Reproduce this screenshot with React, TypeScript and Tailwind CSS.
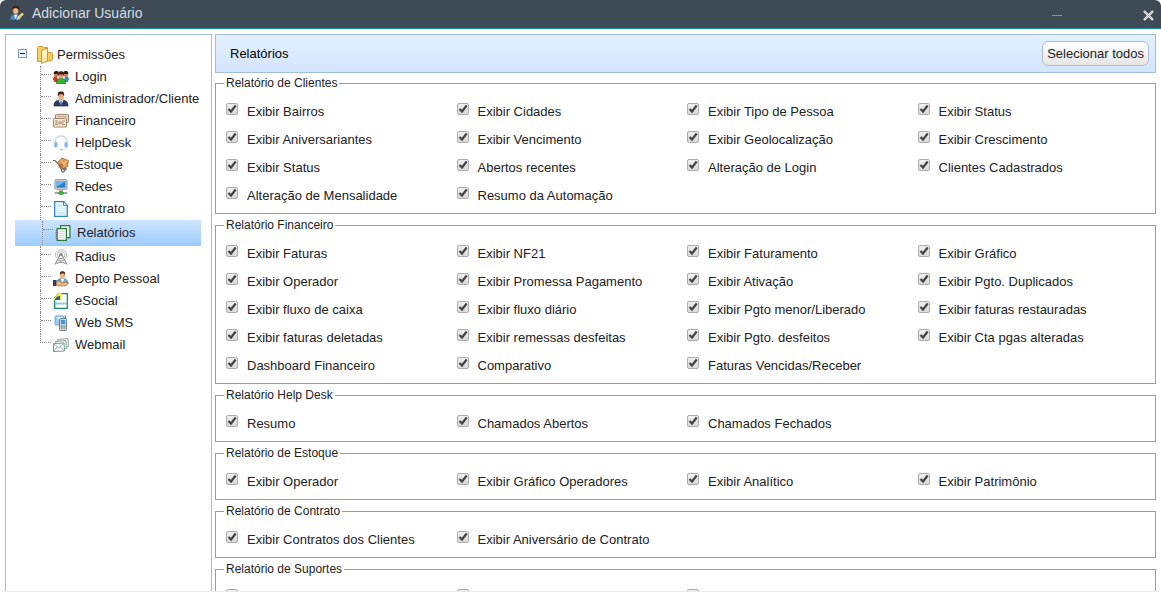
import { useState } from "react";
import type { ReactNode } from "react";

const groups: { title: string; items: string[] }[] = [
  {
    title: "Relatório de Clientes",
    items: [
      "Exibir Bairros", "Exibir Cidades", "Exibir Tipo de Pessoa", "Exibir Status",
      "Exibir Aniversariantes", "Exibir Vencimento", "Exibir Geolocalização", "Exibir Crescimento",
      "Exibir Status", "Abertos recentes", "Alteração de Login", "Clientes Cadastrados",
      "Alteração de Mensalidade", "Resumo da Automação",
    ],
  },
  {
    title: "Relatório Financeiro",
    items: [
      "Exibir Faturas", "Exibir NF21", "Exibir Faturamento", "Exibir Gráfico",
      "Exibir Operador", "Exibir Promessa Pagamento", "Exibir Ativação", "Exibir Pgto. Duplicados",
      "Exibir fluxo de caixa", "Exibir fluxo diário", "Exibir Pgto menor/Liberado", "Exibir faturas restauradas",
      "Exibir faturas deletadas", "Exibir remessas desfeitas", "Exibir Pgto. desfeitos", "Exibir Cta pgas alteradas",
      "Dashboard Financeiro", "Comparativo", "Faturas Vencidas/Receber",
    ],
  },
  { title: "Relatório Help Desk", items: ["Resumo", "Chamados Abertos", "Chamados Fechados"] },
  {
    title: "Relatório de Estoque",
    items: ["Exibir Operador", "Exibir Gráfico Operadores", "Exibir Analítico", "Exibir Patrimônio"],
  },
  { title: "Relatório de Contrato", items: ["Exibir Contratos dos Clientes", "Exibir Aniversário de Contrato"] },
  { title: "Relatório de Suportes", items: ["", "", ""] },
];

function Icon({ children }: { children: ReactNode }) {
  return (
    <svg viewBox="0 0 16 16" className="size-4 shrink-0" aria-hidden="true">
      {children}
    </svg>
  );
}

const userEditIcon = (
  <Icon>
    <path d="M1 15c0-4 2-5.500 5.500-5.500S12 11 12 15z" fill="#4c8fc9" stroke="#24547f" strokeWidth=".7" />
    <path d="M5 9.500 6.500 14 8.500 9.500z" fill="#f4f6f8" />
    <ellipse cx="6.700" cy="5.500" rx="2.900" ry="3.800" fill="#f2bd8c" stroke="#7b4a25" strokeWidth=".6" />
    <path d="M3.500 5C3 1.500 5 .5 7 .5s3.800 1.300 3 4.500C9 3.500 7 3 5 3.500z" fill="#3b2417" />
    <path d="m8 14.500.6-2L13 8l1.500 1.300-4.500 4.500z" fill="#f6d05c" stroke="#fff2b5" strokeWidth=".6" />
  </Icon>
);

const folderIcon = (
  <svg viewBox="0 0 16 18" className="h-[18px] w-4 shrink-0" aria-hidden="true">
    <path d="M.5 1.500 1.500.5H6l1 1h3.500v14H.5z" fill="#f7cf62" stroke="#d09a2c" />
    <path d="M10 6.500h4.500l1 1v6l-1.500 1.500h-4z" fill="#f6cb5a" stroke="#d09a2c" />
    <path d="m4.500 4.500 6-2.500v13l-6 2.500z" fill="#ffe9a6" stroke="#d09a2c" />
    <path d="m5.500 5.500 4-1.700v4.700l-4 3z" fill="#fff6d2" />
  </svg>
);

const treeItems: { label: string; icon: ReactNode }[] = [
  {
    label: "Login",
    icon: (
      <Icon>
        <path d="M0 10.500c0-2.500 1.500-3.500 4-3.500l1 6H1.500z" fill="#d9301f" />
        <path d="M16 10.500c0-2.500-1.500-3.500-4-3.500l-1 6h3.500z" fill="#3988c9" />
        <circle cx="3.200" cy="5.500" r="2.400" fill="#c97f55" />
        <circle cx="12.800" cy="5.500" r="2.400" fill="#c97f55" />
        <path d="M.8 5V3.200C2 1.500 5 1.500 5.700 3.200v1.600zM10.200 5V3.200c1.200-1.700 4.400-1.500 5 0V5z" fill="#2d1b14" />
        <path d="M3.500 14.500c0-4 1.500-5 4.500-5s4.500 1 4.500 5z" fill="#31b72e" stroke="#107414" strokeWidth=".7" />
        <circle cx="8" cy="7" r="2.500" fill="#e39a6a" />
        <path d="M5.200 7C4.800 3 6 2.300 8 2.300S11.500 3 10.800 7L9.500 5.500h-3z" fill="#4a1d14" />
      </Icon>
    ),
  },
  {
    label: "Administrador/Cliente",
    icon: (
      <Icon>
        <path d="M1 15c0-4.500 2.500-6 7-6s7 1.500 7 6z" fill="#2b3d63" stroke="#1a263f" strokeWidth=".7" />
        <path d="m5.500 9.200 2.500 5 2.500-5z" fill="#f7f8fa" />
        <path d="m7.500 10-.4 3.500.9 1 .9-1-.4-3.500z" fill="#48618e" />
        <ellipse cx="8" cy="5.500" rx="2.800" ry="3.800" fill="#eab184" />
        <path d="M5 5.500C4.300 1.500 5.500.5 8 .5s3.700 1 3 5L9.700 3.300H6.500z" fill="#40291c" />
      </Icon>
    ),
  },
  {
    label: "Financeiro",
    icon: (
      <Icon>
        <rect x="2.500" y="1.500" width="13" height="8" rx=".7" fill="#e9dcc8" stroke="#a28469" />
        <path d="M4 3.500h10" stroke="#b49b80" strokeWidth=".8" />
        <rect x=".5" y="5.500" width="13" height="8.500" rx=".7" fill="#f5ead9" stroke="#a28469" />
        <path d="M2 8h3M2 11.500h3M9 8h3M9 11.500h3" stroke="#a58b70" />
        <path d="M2.500 9.800h9" stroke="#947860" strokeDasharray="2 1" />
        <circle cx="7" cy="9.800" r="1.400" fill="#d7c2a5" stroke="#9d8165" strokeWidth=".6" />
      </Icon>
    ),
  },
  {
    label: "HelpDesk",
    icon: (
      <Icon>
        <path d="M2.200 8.500C1.300 3.800 4 1 8 1s6.700 2.800 5.800 7.500" fill="none" stroke="#d2d7e4" strokeWidth="1.500" />
        <path d="M13.500 11.500c0 2-2 3.300-5 3.300" fill="none" stroke="#ccd3e1" />
        <ellipse cx="2.800" cy="9.700" rx="1.700" ry="2.800" fill="#7cb4f2" stroke="#b5ccef" />
        <ellipse cx="13.200" cy="9.700" rx="1.700" ry="2.800" fill="#7cb4f2" stroke="#b5ccef" />
        <rect x="6.500" y="13.700" width="3" height="1.800" rx=".8" fill="#a7c9ed" />
      </Icon>
    ),
  },
  {
    label: "Estoque",
    icon: (
      <Icon>
        <path d="M0 3.500h2l8 8.500h2M5.500 8 9 13.500" fill="none" stroke="#6d6259" strokeWidth="1.100" />
        <path d="m4 6 5-5 6.500 2.500-1 6L10 12z" fill="#df9d5c" stroke="#986032" strokeWidth=".7" />
        <path d="m4 6 6 1.200V12z" fill="#c37a42" />
        <path d="m7.500 3 5 5M10.200 7.200l4-3.500" stroke="#f5cf98" strokeWidth=".9" />
        <circle cx="10" cy="13.500" r="1.700" fill="#d8d8d8" stroke="#555" />
        <circle cx="12.500" cy="12" r="1" fill="#aaa" stroke="#555" strokeWidth=".7" />
      </Icon>
    ),
  },
  {
    label: "Redes",
    icon: (
      <Icon>
        <rect x="2" y=".7" width="12" height="9.500" rx=".7" fill="#d9dedf" stroke="#879196" />
        <rect x="3.500" y="2.200" width="9" height="6.500" fill="#2781cb" />
        <path d="M3.500 2.200h9L5 7H3.500z" fill="#72b8ec" />
        <path d="M6 10.500h4v2.200H6z" fill="#a7aeb1" />
        <path d="M1.500 14h13" stroke="#717d77" strokeWidth="1.300" />
        <ellipse cx="8" cy="14" rx="2.500" ry="1.500" fill="#31c72b" stroke="#157c15" strokeWidth=".6" />
      </Icon>
    ),
  },
  {
    label: "Contrato",
    icon: (
      <Icon>
        <path d="M1.700.7h9l3.600 3.600v11H1.700z" fill="#fff" stroke="#3187b4" strokeWidth="1.300" />
        <path d="M3.300 2.500h6v3h3.500V14H3.300z" fill="#d6edf9" />
        <path d="M10.500 1v3.500H14" fill="#f8fcff" stroke="#3187b4" />
        <path d="M4.500 6.500h7M4.500 8.500h7M4.500 10.500h7" stroke="#fff" strokeWidth=".8" />
      </Icon>
    ),
  },
  {
    label: "Relatórios",
    icon: (
      <Icon>
        <path d="M5.600.6h9.300v12H5.600z" fill="#eff9ed" stroke="#28783b" strokeWidth="1.200" />
        <path d="M2.100 3.600h9.300v11.800H2.100z" fill="#fff" stroke="#28783b" strokeWidth="1.200" />
        <path d="M4 6.500h6M4 8.500h6M4 10.500h6M4 12.500h6" stroke="#b7d3d8" strokeWidth=".8" />
        <path d="M.5 5.500h2.700M.5 7.500h2.700M.5 9.500h2.700M.5 11.500h2.700M.5 13.500h2.700" stroke="#617069" strokeWidth=".8" />
      </Icon>
    ),
  },
  {
    label: "Radius",
    icon: (
      <Icon>
        <path d="M3.500 9C.8 5.500 3 .8 8 .8S15.200 5.500 12.500 9M5 8C3.200 5.500 4.800 2.800 8 2.800S12.800 5.500 11 8" fill="none" stroke="#b4b7b9" />
        <path d="m7.500 5-5.500 10.500M8.500 5 14 15.500M6 9.500h4M5 11l7.500 3.500M11 11l-7.500 3.500" fill="none" stroke="#95999c" strokeWidth="1.200" />
        <circle cx="8" cy="5.500" r="1.500" fill="#80868a" />
      </Icon>
    ),
  },
  {
    label: "Depto Pessoal",
    icon: (
      <Icon>
        <path d="M4 12c0-3 1.500-4.500 5-4.500s6 1.500 6 5z" fill="#74acd6" stroke="#3b6e9d" strokeWidth=".7" />
        <path d="M7.500 7.500 9.500 12l2-4.500z" fill="#fff" />
        <ellipse cx="9.500" cy="4" rx="2.600" ry="3.500" fill="#efb580" />
        <path d="M7 4C6.300.8 8 .2 9.500.2S12.700 1 12 4l-1-1.500H8z" fill="#43291c" />
        <path d="M0 9h3.500v6H0z" fill="#2c3c62" />
        <path d="M3.500 10H6l3 2 4-1 2.500 1-3 3H6l-2.500-1z" fill="#efb783" stroke="#9a6840" strokeWidth=".7" />
      </Icon>
    ),
  },
  {
    label: "eSocial",
    icon: (
      <Icon>
        <path d="M6 .7h8.300v14.600H1.700V5z" fill="#fff" stroke="#139167" strokeWidth="1.300" />
        <path d="M1 7V5l5-5h2.500v7z" fill="#f4ea2c" />
        <path d="M2 7c.5-3 2.500-4 5-4v4z" fill="#2a5cab" />
        <path d="M2.500 10.500h11" stroke="#7cb8d3" strokeWidth="1.800" strokeDasharray="1.500 .4" />
      </Icon>
    ),
  },
  {
    label: "Web SMS",
    icon: (
      <Icon>
        <rect x="2" y="1" width="9" height="9" rx="1" fill="#9dceef" stroke="#6ea6d6" />
        <path d="m3 2 7 5V2z" fill="#e1f3ff" />
        <path d="M12.500.5v4" stroke="#657481" strokeWidth="1.300" />
        <rect x="6.500" y="3.500" width="7" height="12" rx="1" fill="#c8d0d8" stroke="#73808c" />
        <rect x="8" y="5" width="4" height="4" fill="#3f96dc" />
        <path d="M8 11h4M8 13h4" stroke="#64717e" strokeDasharray="1 .5" />
      </Icon>
    ),
  },
  {
    label: "Webmail",
    icon: (
      <Icon>
        <path d="M4.500 2.500 15 1.500l.5 8-10 2z" fill="#f2f6f5" stroke="#90aaa7" />
        <path d="m2.500 4.500 10.500-1 .5 8-10 1z" fill="#f2f6f5" stroke="#90aaa7" />
        <path d="m.5 6.500 10.500-.5.5 8-11 .5z" fill="#fff" stroke="#789995" />
        <path d="m.8 7 5 4 5-4.500M.8 14l3.500-4M11 13.500 7.500 10" fill="none" stroke="#8ba9a5" />
      </Icon>
    ),
  },
];

function TreeItem({ label, icon, selected, last, onSelect }: {
  label: string;
  icon: ReactNode;
  selected: boolean;
  last: boolean;
  onSelect: () => void;
}) {
  return (
    <li>
      <button
        type="button"
        onClick={onSelect}
        aria-current={selected ? "page" : undefined}
        className={
          selected
            ? "flex h-[26px] w-full items-center bg-linear-to-b from-[#cde5ff] to-[#9ccbfe] py-px pl-[27px] text-left"
            : "flex h-[22px] w-full items-center pl-[25px] text-left"
        }
      >
        <span
          className={
            last
              ? "mr-[2px] h-full w-[11px]"
              : "mr-[2px] h-full w-[11px] border-l border-dotted border-[#888]"
          }
        >
          <span
            className={
              last
                ? "block h-[9px] border-b border-l border-dotted border-[#888]"
                : "block h-[9px] border-b border-dotted border-[#888]"
            }
          />
        </span>
        {icon}
        <span className="ml-[6px] whitespace-nowrap leading-[16px]">{label}</span>
      </button>
    </li>
  );
}

function CheckItem({ label, name, checked, onToggle }: {
  label: string;
  name: string;
  checked: boolean;
  onToggle: () => void;
}) {
  return (
    <label className="flex h-7 items-start gap-[9px] pt-[6px]">
      <span className="relative size-3 shrink-0">
        <input
          type="checkbox"
          aria-label={label || name}
          checked={checked}
          onChange={onToggle}
          className="peer block size-3 appearance-none rounded-[2px] border border-[#adadad] bg-linear-to-b from-[#eeeeee] to-[#dadada]"
        />
        <svg viewBox="0 0 12 12" className="pointer-events-none absolute inset-0 hidden size-3 peer-checked:block" aria-hidden="true">
          <path d="m2.500 6 2.500 2.500L9.700 2.500" fill="none" stroke="#444" strokeWidth="2.200" />
        </svg>
      </span>
      {label && <span className="whitespace-nowrap leading-[17px]">{label}</span>}
    </label>
  );
}

export default function App() {
  const [active, setActive] = useState("Relatórios");
  const [open, setOpen] = useState(true);
  const [off, setOff] = useState<string[]>([]);

  const toggle = (key: string) =>
    setOff((prev) => (prev.includes(key) ? prev.filter((k) => k !== key) : [...prev, key]));

  return (
    <div className="flex h-screen flex-col overflow-hidden rounded-b-[4px] border-b border-[#ececec] bg-white font-['Liberation_Sans',Arial,sans-serif] text-[13px] text-[#222]">
      <header className="flex h-[29px] shrink-0 items-center rounded-t-md border-b border-[#158fa6] bg-[#3e4b57] pb-[2px] pl-[9px] pr-[7px] text-[#d5dbe0]">
        {userEditIcon}
        <h1 className="ml-[7px] grow text-[14px] leading-[16px]">Adicionar Usuário</h1>
        <button type="button" aria-label="Minimizar" className="mr-20 flex h-4 w-[11px] items-center">
          <svg viewBox="0 0 11 11" className="size-[11px]" aria-hidden="true">
            <path d="M0 7.500h10" stroke="#8b949b" />
          </svg>
        </button>
        <button type="button" aria-label="Fechar" className="flex h-4 w-[11px] items-end">
          <svg viewBox="0 0 11 11" className="size-[11px]" aria-hidden="true">
            <path d="m1 1 9 9M10 1l-9 9" stroke="#f2f4f5" strokeWidth="2.400" />
            <path d="m1.500 1.500 8 8M9.500 1.500l-8 8" stroke="#76818a" strokeWidth=".6" />
          </svg>
        </button>
      </header>

      <div className="flex min-h-0 grow gap-[3px] px-[5px] pt-[5px]">
        <nav aria-label="Permissões" className="w-[207px] shrink-0 border-x border-t border-[#a3bed6] pl-[9px] pr-[10px] pt-[9px]">
          <div className="flex h-[22px] items-center pl-[3px]">
            <button
              type="button"
              aria-label="Alternar permissões"
              aria-expanded={open}
              onClick={() => setOpen(!open)}
              className="mb-1 mr-[10px] size-[9px] shrink-0"
            >
              <svg viewBox="0 0 9 9" className="size-[9px]" aria-hidden="true">
                <rect x=".5" y=".5" width="8" height="8" fill="#eef3f8" stroke="#7b9ebd" />
                <path d={open ? "M2 4.500h5" : "M2 4.500h5M4.500 2v5"} stroke="#222" />
              </svg>
            </button>
            {folderIcon}
            <span className="ml-1 leading-[16px]">Permissões</span>
          </div>
          {open && (
            <ul>
              {treeItems.map((item, i) => (
                <TreeItem
                  key={item.label}
                  label={item.label}
                  icon={item.icon}
                  selected={item.label === active}
                  last={i === treeItems.length - 1}
                  onSelect={() => setActive(item.label)}
                />
              ))}
            </ul>
          )}
        </nav>

        <main className="flex min-w-0 grow flex-col overflow-hidden">
          <div className="mb-[3px] flex h-[39px] shrink-0 items-center justify-between border border-[#a3bed6] bg-linear-to-b from-[#e4f0ff] to-[#d4e5ff] pl-[14px] pr-[6px] text-black">
            <h2>Relatórios</h2>
            <button
              type="button"
              onClick={() => setOff([])}
              className="h-[25px] rounded-[6px] border border-[#a9c0d4] bg-linear-to-b from-white to-[#e5e5e5] px-1 text-[#222]"
            >
              Selecionar todos
            </button>
          </div>
          <div className="flex flex-col gap-1">
            {groups.map((group) => (
              <fieldset key={group.title} className="border border-[#7fa4c4] pb-1 pl-[10px] pr-[7px]">
                <legend className="-ml-[2px] px-[2px] text-[12px] leading-[14px]">{group.title}</legend>
                <div className="grid grid-cols-4 pt-[7px]">
                  {group.items.map((item, i) => {
                    const key = `${group.title} ${i + 1}`;
                    return (
                      <CheckItem
                        key={key}
                        label={item}
                        name={key}
                        checked={!off.includes(key)}
                        onToggle={() => toggle(key)}
                      />
                    );
                  })}
                </div>
              </fieldset>
            ))}
          </div>
        </main>
      </div>
    </div>
  );
}
